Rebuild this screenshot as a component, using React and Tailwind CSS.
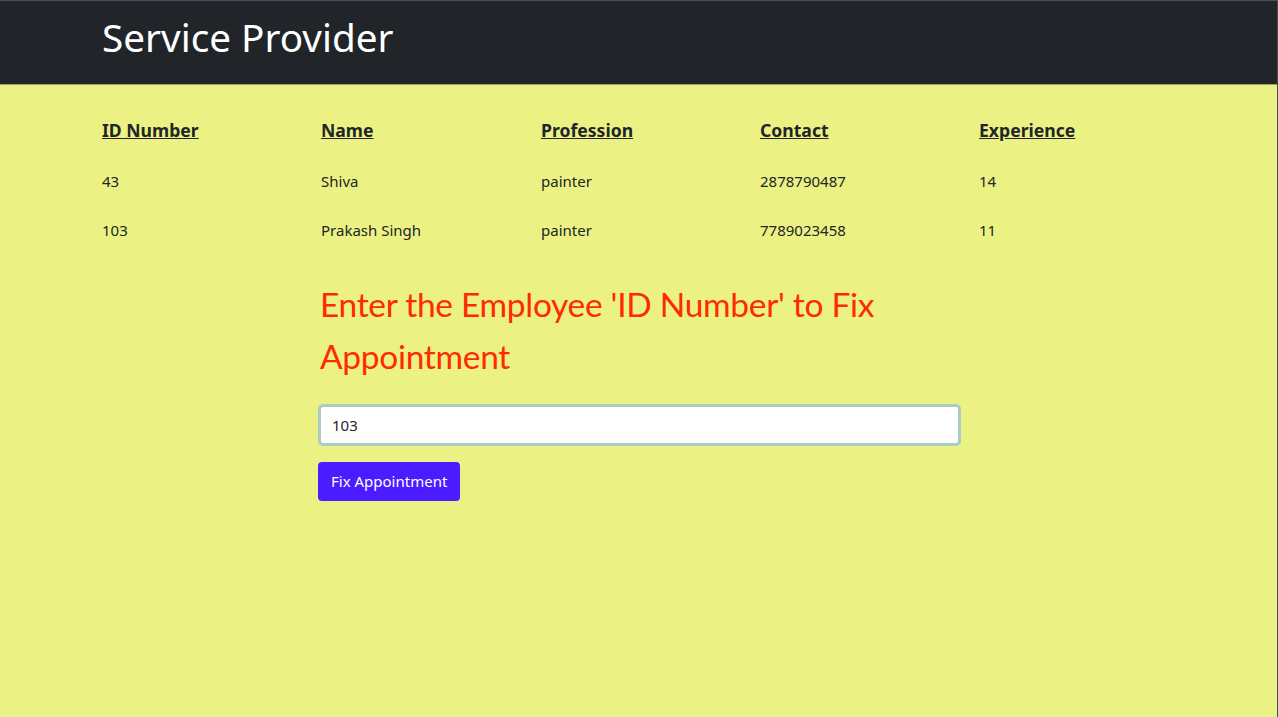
import { useState } from 'react'

const providers = [
  { id: 43, name: 'Shiva', profession: 'painter', contact: '2878790487', experience: 14 },
  { id: 103, name: 'Prakash Singh', profession: 'painter', contact: '7789023458', experience: 11 },
]

export default function App() {
  const [employeeId, setEmployeeId] = useState('103')

  return (
    <div className="min-h-[717px] bg-[#ebf283] border-t border-r border-[#4a4d51] text-[#212529] font-['Noto_Sans',sans-serif]">
      <header className="h-[84px] bg-[#212529] border-b border-[#9ea36a] flex items-center pl-[102px]">
        <h1 className="text-[38.7px] text-white leading-none -mt-[10px]">Service Provider</h1>
      </header>

      <div className="pl-[102px] pr-[80px] pt-[32px]">
        <div className="grid grid-cols-[219px_220px_219px_219px_1fr] text-[15px]">
          <div className="font-bold underline text-[17.6px] h-[53px]">ID Number</div>
          <div className="font-bold underline text-[17.6px] h-[53px]">Name</div>
          <div className="font-bold underline text-[17.6px] h-[53px]">Profession</div>
          <div className="font-bold underline text-[17.6px] h-[53px]">Contact</div>
          <div className="font-bold underline text-[17.6px] h-[53px]">Experience</div>
          {providers.map(p => (
            <div key={p.id} className="contents">
              <div className="h-[49px]">{p.id}</div>
              <div className="h-[49px]">{p.name}</div>
              <div className="h-[49px]">{p.profession}</div>
              <div className="h-[49px]">{p.contact}</div>
              <div className="h-[49px]">{p.experience}</div>
            </div>
          ))}
        </div>
      </div>

      <div className="ml-[318px] w-[643px] mt-[10px]">
        <h2 className="text-[#ff2a00] text-[33.5px] leading-[52px] font-['Lato',sans-serif] tracking-[-0.3px] pl-[2px]">
          Enter the Employee 'ID Number' to Fix Appointment
        </h2>
        <input
          value={employeeId}
          onChange={e => setEmployeeId(e.target.value)}
          className="mt-[22px] w-full h-[42px] bg-white rounded-[5px] border-[3px] border-[#a9ccc4] px-[11px] text-[15px] outline-none"
        />
        <button className="mt-[16px] h-[39px] px-[13px] bg-[#4a1cff] text-white text-[15px] rounded-[4px]">
          Fix Appointment
        </button>
      </div>
    </div>
  )
}
